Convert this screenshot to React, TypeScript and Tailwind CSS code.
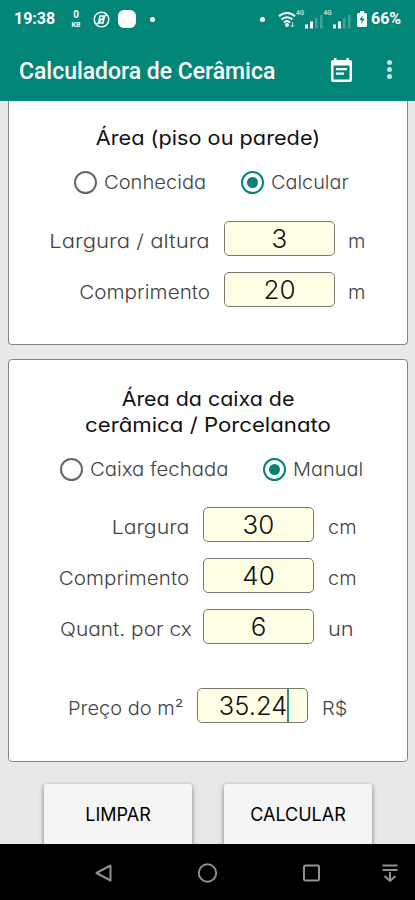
import React, { useState } from 'react';

interface RadioProps {
  label: string;
  checked: boolean;
  onSelect: () => void;
  className: string;
}

const Radio: React.FC<RadioProps> = ({ label, checked, onSelect, className }) => (
  <button onClick={onSelect} className="flex items-center gap-[7px] h-6">
    <span
      className={`flex items-center justify-center w-[23px] h-[23px] rounded-full border-2 ${
        checked ? 'border-[#078375]' : 'border-[#666666]'
      }`}
    >
      {checked && <span className="w-[11px] h-[11px] rounded-full bg-[#078375]" />}
    </span>
    <span
      className={`pt-px text-left whitespace-nowrap text-[19px] leading-6 font-light text-[#444444] origin-left ${className}`}
    >
      {label}
    </span>
  </button>
);

interface FieldProps {
  label: string;
  unit: string;
  value: string;
  labelBox: string;
  labelText: string;
  unitText: string;
  focused?: boolean;
}

const Field: React.FC<FieldProps> = ({ label, unit, value, labelBox, labelText, unitText, focused }) => (
  <div className="flex items-center h-[35px]">
    <div className={`flex justify-end pt-1.5 shrink-0 ${labelBox}`}>
      <span
        className={`inline-block whitespace-nowrap text-[19px] leading-6 font-light text-[#444444] origin-right ${labelText}`}
      >
        {label}
      </span>
    </div>
    <div
      className={`flex items-center justify-center w-[111px] h-[35px] shrink-0 rounded-[5px] border border-[#77776f] bg-[#ffffe6] leading-none font-light text-[#111111] ${
        focused ? 'text-[25.5px] pl-[3px]' : 'text-[26px]'
      }`}
    >
      <span>{value}</span>
      {focused && <span className="w-[2px] h-[33px] bg-[#2f9488]" />}
    </div>
    <span
      className={`pt-1.5 whitespace-nowrap text-[19px] leading-6 font-light text-[#444444] origin-left ${unitText}`}
    >
      {unit}
    </span>
  </div>
);

const SignalBars = () => (
  <div className="flex items-end w-[27.5px] h-[19px]">
    <span className="self-start w-[8px] text-[6.5px] leading-[7px] font-bold opacity-70">4G</span>
    <svg className="ml-px w-[18px] h-[15px]" viewBox="0 0 18 15" fill="white">
      <rect x="0" y="10.5" width="3" height="4" />
      <rect x="5" y="7.5" width="3" height="7" />
      <rect x="10" y="4" width="2.5" height="10.5" opacity=".25" />
      <rect x="15" y="1" width="2.5" height="13.5" opacity=".25" />
    </svg>
  </div>
);

const StatusBar = () => (
  <div className="flex items-center h-[38px] pl-[14px] pr-[13px] text-white">
    <span className="w-[42px] text-[16px] leading-none font-bold whitespace-nowrap">19:38</span>
    <div className="ml-[14px] w-3 flex flex-col items-center font-bold">
      <span className="text-[10px] leading-[12px]">0</span>
      <span className="text-[7px] leading-[8px]">KB</span>
    </div>
    <svg className="ml-[11px] w-[17px] h-[17px]" viewBox="0 0 17 17" fill="none" stroke="white" strokeWidth="1.5">
      <circle cx="8.5" cy="8.5" r="7.3" />
      <path d="M5.5 12 7 5h5M6 8.5h5M5.5 12H10l1.5-7M3.5 13.5l10-10" />
    </svg>
    <span className="ml-2 w-[18px] h-[18px] rounded-[6px] bg-white" />
    <span className="ml-[14px] w-[5px] h-[5px] rounded-full bg-white" />
    <span className="ml-auto w-[5px] h-[5px] rounded-full bg-white" />
    <svg className="ml-[13px] w-[18px] h-[17px]" viewBox="0 0 18 17" fill="none" stroke="white" strokeWidth="2">
      <path d="M1 5.3C5.5 1 12.5 1 17 5.3M3.5 8.5c3-3 8-3 11 0M6 11.5c1.8-1.8 4.2-1.8 6 0" />
      <circle cx="9" cy="14" r="1" fill="white" />
      <path d="M14.5 11v4.5M12.5 14l2 2 2-2" strokeWidth="1" opacity=".7" />
    </svg>
    <SignalBars />
    <SignalBars />
    <svg className="ml-[6px] w-[10px] h-[16px]" viewBox="0 0 10 16">
      <path d="M3 0h4v2h1.5A1.5 1.5 0 0 1 10 3.5v11A1.5 1.5 0 0 1 8.5 16h-7A1.5 1.5 0 0 1 0 14.5v-11A1.5 1.5 0 0 1 1.5 2H3z" fill="white" />
      <path d="M5.8 4 2.5 9h2.2l-.6 4 3.5-5.5H5.2z" fill="#078375" />
    </svg>
    <span className="ml-1 w-[31px] text-[16px] leading-none font-bold whitespace-nowrap">66%</span>
  </div>
);

const NavBar = () => (
  <div className="h-14 shrink-0 bg-black">
    <svg className="w-full h-14" viewBox="0 0 415 56" fill="none" stroke="#919191" strokeWidth="2">
      <path d="M110.5 21.5v15L96.5 29z" strokeLinejoin="round" />
      <circle cx="207.5" cy="29" r="8.7" />
      <rect x="304" y="21.5" width="15" height="15" rx="1.5" />
      <path d="M382.5 21.5h15M382.5 26h15M390 28v8.5M384.5 32l5.5 5 5.5-5" />
    </svg>
  </div>
);

export default function App() {
  const [area, setArea] = useState('calcular');
  const [caixa, setCaixa] = useState('manual');

  return (
    <div className="flex flex-col w-[415px] h-[900px] overflow-hidden bg-[#e8e8e8] font-['Inter',sans-serif] [font-feature-settings:'cv11']">
      <header className="h-[101px] shrink-0 bg-[#038577] font-['Roboto',sans-serif] [font-feature-settings:normal] text-white">
        <StatusBar />
        <div className="flex items-center h-[63px] pl-[19px] pr-[23px] pt-[3px]">
          <h1 className="text-[23px] leading-none font-medium tracking-[-0.03px] whitespace-nowrap">
            Calculadora de Cerâmica
          </h1>
          <svg className="ml-auto w-[21px] h-6 -mt-[3px]" viewBox="0 0 21 24">
            <path
              fillRule="evenodd"
              fill="white"
              d="M3 0h2.500v2h10V0H18v2h1a2 2 0 0 1 2 2v18a2 2 0 0 1-2 2H2a2 2 0 0 1-2-2V4a2 2 0 0 1 2-2h1zM2.500 7.500v14h16v-14zM5 10h11v2.200H5zM5 14.500h8v2.200H5z"
            />
          </svg>
          <div className="ml-[35px] -mt-[3px] flex flex-col gap-[2px]">
            <span className="w-[5px] h-[5px] rounded-full bg-[#c5e4df]" />
            <span className="w-[5px] h-[5px] rounded-full bg-[#c5e4df]" />
            <span className="w-[5px] h-[5px] rounded-full bg-[#c5e4df]" />
          </div>
        </div>
      </header>

      <main className="flex-1 min-h-0 overflow-hidden px-2">
        <section className="w-[400px] h-[244px] rounded-b-[4px] border border-t-0 border-[#858585] bg-white pt-6">
          <h2 className="text-center text-[20px] leading-[26px] font-normal text-[#111111] scale-x-[1.085]">
            Área (piso ou parede)
          </h2>
          <div className="flex pl-[65px] mt-[19px] gap-[31px]">
            <Radio label="Conhecida" checked={area === 'conhecida'} onSelect={() => setArea('conhecida')} className="w-[106px] scale-x-[1.06]" />
            <Radio label="Calcular" checked={area === 'calcular'} onSelect={() => setArea('calcular')} className="scale-x-[1.045]" />
          </div>
          <div className="mt-[27px] flex flex-col gap-4">
            <Field label="Largura / altura" unit="m" value="3" labelBox="w-[215px] pr-[14px]" labelText="scale-x-[1.165]" unitText="ml-[13px] scale-x-[1.05]" />
            <Field label="Comprimento" unit="m" value="20" labelBox="w-[215px] pr-[14px]" labelText="scale-x-[1.09]" unitText="ml-[13px] scale-x-[1.05]" />
          </div>
        </section>

        <section className="mt-[14px] w-[400px] h-[403px] rounded-[4px] border border-[#858585] bg-white pt-[26px]">
          <h2 className="text-center text-[20px] leading-[26px] font-normal text-[#111111]">
            <span className="block scale-x-[1.07]">Área da caixa de</span>
            <span className="block scale-x-[1.11]">cerâmica / Porcelanato</span>
          </h2>
          <div className="flex pl-[51px] mt-[19px] gap-[31px]">
            <Radio label="Caixa fechada" checked={caixa === 'fechada'} onSelect={() => setCaixa('fechada')} className="w-[142px] scale-x-[1.07]" />
            <Radio label="Manual" checked={caixa === 'manual'} onSelect={() => setCaixa('manual')} className="scale-x-[1.05]" />
          </div>
          <div className="mt-[26px] flex flex-col gap-4">
            <Field label="Largura" unit="cm" value="30" labelBox="w-[194px] pr-[14px]" labelText="scale-x-[1.12]" unitText="ml-[14px] scale-x-[1.05]" />
            <Field label="Comprimento" unit="cm" value="40" labelBox="w-[194px] pr-[14px]" labelText="scale-x-[1.085]" unitText="ml-[14px] scale-x-[1.05]" />
            <Field label="Quant. por cx" unit="un" value="6" labelBox="w-[194px] pr-[11px]" labelText="scale-x-[1.1]" unitText="ml-[14px] scale-x-[1.15]" />
          </div>
          <div className="mt-11">
            <Field label="Preço do m²" unit="R$" value="35.24" labelBox="w-[188px] pr-[13px]" labelText="scale-x-[1.055]" unitText="ml-[14px] scale-x-[1.05]" focused />
          </div>
        </section>

        <div className="mt-[22px] pl-9 flex gap-8">
          <button className="w-[148px] h-[80px] pb-[19px] rounded-[3px] bg-[#f5f5f5] text-[18px] text-black shadow-[0_2px_5px_rgba(0,0,0,0.5)]">
            LIMPAR
          </button>
          <button className="w-[148px] h-[80px] pb-[19px] rounded-[3px] bg-[#f5f5f5] text-[18px] text-black shadow-[0_2px_5px_rgba(0,0,0,0.5)]">
            CALCULAR
          </button>
        </div>
      </main>

      <NavBar />
    </div>
  );
}
